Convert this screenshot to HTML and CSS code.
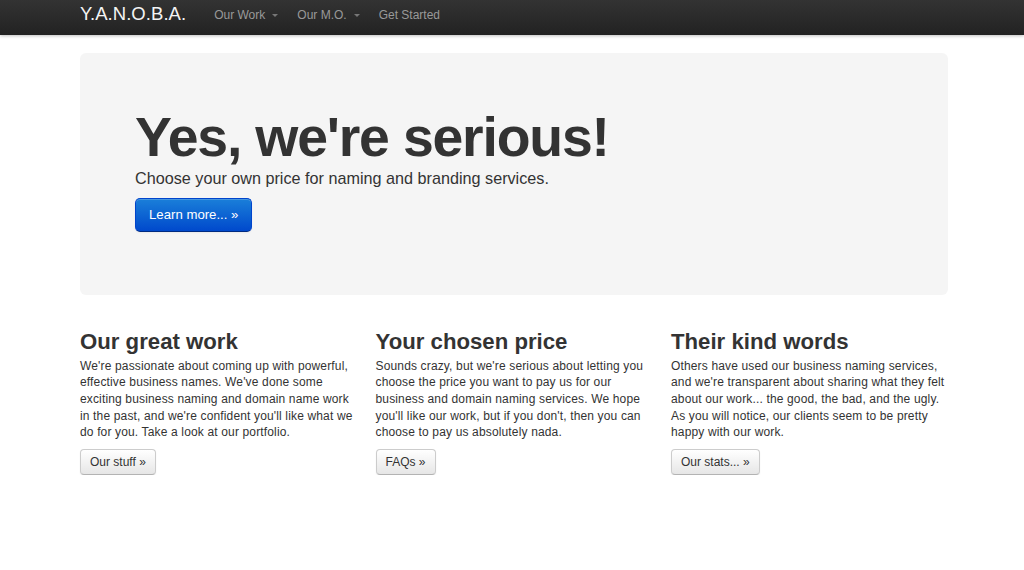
FILE: index.html
```html
<!DOCTYPE html>
<html lang="en">
<head>
<meta charset="utf-8">
<title>Y.A.N.O.B.A.</title>
<link rel="stylesheet" href="styles.css">
</head>
<body>
<header class="navbar">
  <div class="container nav-inner">
    <a class="brand" href="#">Y.A.N.O.B.A.</a>
    <ul class="nav">
      <li><a href="#">Our Work<span class="caret"></span></a></li>
      <li><a href="#">Our M.O.<span class="caret"></span></a></li>
      <li><a href="#">Get Started</a></li>
    </ul>
  </div>
</header>
<main class="container">
  <section class="hero">
    <h1>Yes, we're serious!</h1>
    <p>Choose your own price for naming and branding services.</p>
    <div><a class="btn btn-primary btn-large" href="#">Learn more... &raquo;</a></div>
  </section>
  <div class="row">
    <div class="span">
      <h2>Our great work</h2>
      <p>We're passionate about coming up with powerful, effective business names. We've done some exciting business naming and domain name work in the past, and we're confident you'll like what we do for you. Take a look at our portfolio.</p>
      <div><a class="btn" href="#">Our stuff &raquo;</a></div>
    </div>
    <div class="span">
      <h2>Your chosen price</h2>
      <p>Sounds crazy, but we're serious about letting you choose the price you want to pay us for our business and domain naming services. We hope you'll like our work, but if you don't, then you can choose to pay us absolutely nada.</p>
      <div><a class="btn" href="#">FAQs &raquo;</a></div>
    </div>
    <div class="span">
      <h2>Their kind words</h2>
      <p>Others have used our business naming services, and we're transparent about sharing what they felt about our work... the good, the bad, and the ugly. As you will notice, our clients seem to be pretty happy with our work.</p>
      <div><a class="btn" href="#">Our stats... &raquo;</a></div>
    </div>
  </div>
</main>
</body>
</html>
```

FILE: styles.css
```css
* { box-sizing: border-box; }
html, body { margin: 0; padding: 0; }
body {
  font-family: "Liberation Sans", Arial, sans-serif;
  font-size: 12px;
  line-height: 16.6px;
  color: #333;
  background: #fff;
}
a { text-decoration: none; }

.container {
  width: 868px;
  margin: 0 0 0 80px;
}

.navbar {
  height: 35px;
  background: linear-gradient(to bottom, #333333, #222222);
  box-shadow: 0 1px 3px rgba(0,0,0,0.25);
}
.nav-inner {
  display: flex;
  align-items: flex-start;
}
.brand {
  margin-top: 5px;
  margin-right: 18.5px;
  font-size: 18.5px;
  line-height: 18.5px;
  color: #f4f4f4;
  letter-spacing: 0.05px;
}
.nav {
  display: flex;
  list-style: none;
  margin: 8px 0 0;
  padding: 0;
}
.nav a {
  display: flex;
  align-items: center;
  padding: 0 9.5px;
  font-size: 12px;
  line-height: 14px;
  color: #999;
}
.caret {
  display: inline-block;
  width: 0;
  height: 0;
  margin-left: 7px;
  margin-top: 1px;
  border-top: 3.5px solid #777;
  border-left: 3px solid transparent;
  border-right: 3px solid transparent;
}

.hero {
  margin-top: 18px;
  margin-bottom: 30px;
  padding: 57px 55px 63px;
  background: #f5f5f5;
  border-radius: 6px;
}
.hero h1 {
  margin: 2px 0 0;
  font-size: 55.4px;
  line-height: 50.9px;
  font-weight: bold;
  letter-spacing: -1.2px;
  color: #333;
}
.hero p {
  margin: 3px 0 6.8px;
  font-size: 16.2px;
  line-height: 24.9px;
  font-weight: normal;
}

.btn {
  display: inline-block;
  height: 26px;
  padding: 0 9px;
  font-size: 12px;
  line-height: 24px;
  color: #333;
  background: linear-gradient(to bottom, #ffffff, #e6e6e6);
  border: 1px solid #ccc;
  border-bottom-color: #b3b3b3;
  border-radius: 4px;
  box-shadow: inset 0 1px 0 rgba(255,255,255,0.2), 0 1px 2px rgba(0,0,0,0.05);
}
.btn-large {
  height: 34px;
  padding: 0 13px;
  font-size: 13.2px;
  line-height: 32px;
  border-radius: 5px;
}
.btn-primary {
  color: #fff;
  background: linear-gradient(to bottom, #1a7fd9, #0049cc);
  border-color: #0044cc #0044cc #002a80;
}

.row {
  display: flex;
  gap: 18.5px;
}
.span {
  width: 277px;
}
.span h2 {
  margin: 0;
  font-size: 22.2px;
  line-height: 33.2px;
  font-weight: bold;
  color: #333;
}
.span p {
  margin: 0 0 8.3px;
  letter-spacing: 0.15px;
}
```
